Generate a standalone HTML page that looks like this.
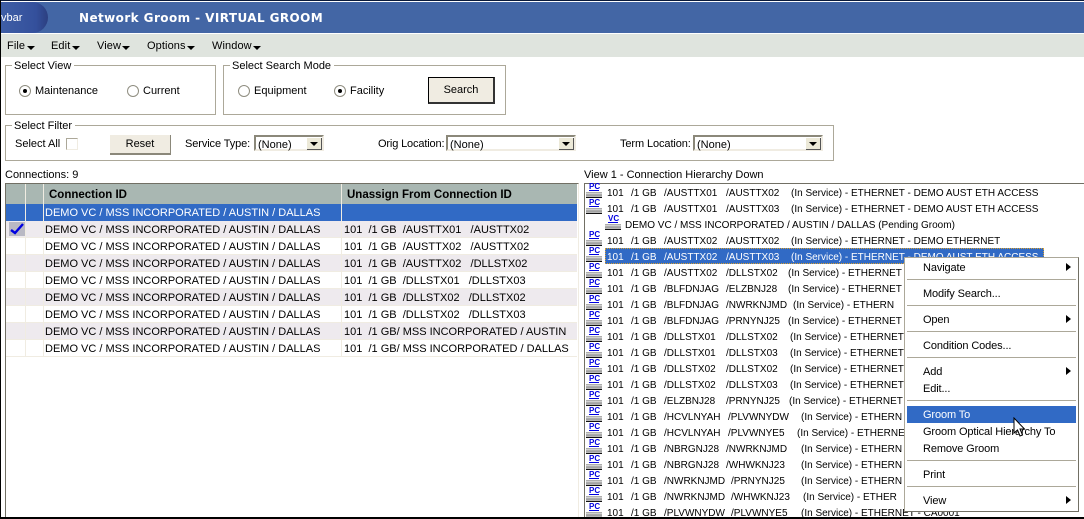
<!DOCTYPE html>
<html><head><meta charset="utf-8"><style>
html,body{margin:0;padding:0;background:#fff}
#p{position:relative;width:1084px;height:519px;overflow:hidden;background:#fff;font:11px/13px "Liberation Sans",sans-serif;color:#000}
#p div,#p span,#p svg{position:absolute;white-space:nowrap}
.g{border:1px solid #aca899;box-sizing:border-box}
.l{background:#fff;padding:0 3px 0 2px;height:13px}
.t{height:13px}
.m{top:40px;font-size:11px;letter-spacing:.1px}
.a{top:46px;width:0;height:0;border:4px solid transparent;border-top:4px solid #000;border-bottom:0}
.r{width:12px;height:12px;top:85px;border-radius:50%;box-sizing:border-box;border:1px solid #8f8d80;background:#fff}
.d{width:4px;height:4px;border-radius:50%;background:#000;left:3px;top:3px}
.b{background:#f0ece2;box-sizing:border-box;text-align:center}
.s{top:135px;height:16px;box-sizing:border-box;border:2px solid #8b887a;border-right-color:#f0ece2;border-bottom-color:#f0ece2;background:#fff;padding-left:2px;line-height:16px;font-size:11px}
.sb{top:1px;right:0;width:15px;height:12px;background:#ece9d8;border-right:1px solid #555;border-bottom:1px solid #555;box-sizing:border-box}
.sb i{position:absolute;left:3px;top:4px;width:0;height:0;border:4px solid transparent;border-top:4px solid #000;border-bottom:0}
.row{left:6px;width:571px;height:17px;box-sizing:border-box;border-bottom:1px solid #f0ece2}
.a1{background:#eeeaee}
.c1{left:39px;top:3px}
.c2{left:338px;top:3px}
.v{position:absolute;width:1px;background:#f0ece2}
.lr{left:585px;width:320px;height:16px;font-size:10px}
.lr span{top:3px}
.ic{left:1px;top:0;width:16px;height:16px}
.ic b{position:absolute;left:3px;top:0;width:10px;font:bold 8px/6px "Liberation Sans",sans-serif;color:#0000e0;border-bottom:1px solid #0000e0;text-align:center;height:6px}
.ic u{position:absolute;left:0;top:8px;width:16px;height:6px;background:linear-gradient(#8a8a8a 0,#d0d0d0 1px,#d0d0d0 2px,#8a8a8a 3px,#b8b8b8 4px,#b8b8b8 5px,#111 5px)}
.mi{left:923px;height:13px;font-size:11px;letter-spacing:-.12px}
.ms{left:907px;width:169px;height:1px;background:#aca899}
.tri{left:1066px;width:0;height:0;border:4px solid transparent;border-left:5px solid #000;border-right:0}
</style></head><body><div id="p">
<div style="left:0;top:0;width:1084px;height:1px;background:#0a1a3a"></div>
<div style="left:0;top:2px;width:1084px;height:31px;background:#4366a5"></div>
<div style="left:0;top:2px;width:48px;height:31px;border-radius:0 20px 20px 0;background:linear-gradient(90deg,#3f5fa6 0%,#34509c 75%,#2c3f80 100%)"></div>
<div style="left:1px;top:12px;color:#fff;font-size:11px">vbar</div>
<div style="left:79px;top:11px;color:#fff;font:bold 12px/15px 'DejaVu Sans',sans-serif;letter-spacing:.42px">Network Groom - VIRTUAL GROOM</div>
<div style="left:0;top:34px;width:1084px;height:23px;background:#dfe4de"></div>
<div class="m" style="left:7px">File</div><div class="a" style="left:27px"></div>
<div class="m" style="left:51px">Edit</div><div class="a" style="left:72px"></div>
<div class="m" style="left:97px">View</div><div class="a" style="left:122px"></div>
<div class="m" style="left:147px">Options</div><div class="a" style="left:187px"></div>
<div class="m" style="left:212px">Window</div><div class="a" style="left:253px"></div>

<div class="g" style="left:5px;top:65px;width:211px;height:50px"></div>
<div class="l" style="left:12px;top:60px">Select View</div>
<div class="r" style="left:19px"><div class="d"></div></div><div class="t" style="left:35px;top:85px">Maintenance</div>
<div class="r" style="left:127px"></div><div class="t" style="left:143px;top:85px">Current</div>

<div class="g" style="left:223px;top:65px;width:283px;height:50px"></div>
<div class="l" style="left:230px;top:60px">Select Search Mode</div>
<div class="r" style="left:238px"></div><div class="t" style="left:254px;top:85px">Equipment</div>
<div class="r" style="left:334px"><div class="d"></div></div><div class="t" style="left:350px;top:85px">Facility</div>
<div class="b" style="left:428px;top:77px;width:67px;height:27px;border:1px solid #000;border-right:2px solid #333;border-bottom:2px solid #333;line-height:24px">Search</div>

<div class="g" style="left:5px;top:125px;width:829px;height:36px"></div>
<div class="l" style="left:12px;top:120px">Select Filter</div>
<div class="t" style="left:15px;top:138px">Select All</div>
<div style="left:66px;top:138px;width:12px;height:12px;box-sizing:border-box;border:1px solid #aca899;border-right-color:#f0ece2;border-bottom-color:#f0ece2"></div>
<div class="b" style="left:110px;top:135px;width:61px;height:20px;border-right:1px solid #8b887a;border-bottom:2px solid #8b887a;line-height:18px">Reset</div>
<div class="t" style="left:185px;top:138px;letter-spacing:-.1px">Service Type:</div>
<div class="s" style="left:254px;width:70px">(None)<div class="sb"><i></i></div></div>
<div class="t" style="left:378px;top:138px;letter-spacing:-.15px">Orig Location:</div>
<div class="s" style="left:446px;width:130px">(None)<div class="sb"><i></i></div></div>
<div class="t" style="left:620px;top:138px;letter-spacing:-.1px">Term Location:</div>
<div class="s" style="left:693px;width:130px">(None)<div class="sb"><i></i></div></div>

<div class="t" style="left:5px;top:169px">Connections: 9</div>
<div class="t" style="left:584px;top:169px">View 1 - Connection Hierarchy Down</div>

<div style="left:5px;top:183px;width:574px;height:336px;box-sizing:border-box;border:1px solid #716f64;border-bottom:0;border-right-color:#f0ece2"></div>
<div style="left:6px;top:184px;width:571px;height:20px;background:#a9b7b2"></div>
<div style="left:49px;top:189px;font-weight:bold;font-size:11.5px">Connection ID</div>
<div style="left:347px;top:189px;font-weight:bold;font-size:11.5px">Unassign From Connection ID</div>
<div class="v" style="left:25px;top:184px;height:20px"></div><div class="v" style="left:43px;top:184px;height:20px"></div><div class="v" style="left:341px;top:184px;height:20px"></div>

<div class="row" style="top:204px;background:#316ac5;color:#fff;border:0"><div class="c1">DEMO VC / MSS INCORPORATED / AUSTIN / DALLAS</div></div>
<div class="row a1" style="top:221px"><div class="c1">DEMO VC / MSS INCORPORATED / AUSTIN / DALLAS</div><div class="c2">101&nbsp; /1 GB&nbsp; /AUSTTX01&nbsp; &nbsp;/AUSTTX02</div></div>
<div class="row" style="top:238px"><div class="c1">DEMO VC / MSS INCORPORATED / AUSTIN / DALLAS</div><div class="c2">101&nbsp; /1 GB&nbsp; /AUSTTX02&nbsp; &nbsp;/AUSTTX02</div></div>
<div class="row a1" style="top:255px"><div class="c1">DEMO VC / MSS INCORPORATED / AUSTIN / DALLAS</div><div class="c2">101&nbsp; /1 GB&nbsp; /AUSTTX02&nbsp; &nbsp;/DLLSTX02</div></div>
<div class="row" style="top:272px"><div class="c1">DEMO VC / MSS INCORPORATED / AUSTIN / DALLAS</div><div class="c2">101&nbsp; /1 GB&nbsp; /DLLSTX01&nbsp; &nbsp;/DLLSTX03</div></div>
<div class="row a1" style="top:289px"><div class="c1">DEMO VC / MSS INCORPORATED / AUSTIN / DALLAS</div><div class="c2">101&nbsp; /1 GB&nbsp; /DLLSTX02&nbsp; &nbsp;/DLLSTX02</div></div>
<div class="row" style="top:306px"><div class="c1">DEMO VC / MSS INCORPORATED / AUSTIN / DALLAS</div><div class="c2">101&nbsp; /1 GB&nbsp; /DLLSTX02&nbsp; &nbsp;/DLLSTX03</div></div>
<div class="row a1" style="top:323px"><div class="c1">DEMO VC / MSS INCORPORATED / AUSTIN / DALLAS</div><div class="c2">101&nbsp; /1 GB/ MSS INCORPORATED / AUSTIN</div></div>
<div class="row" style="top:340px"><div class="c1">DEMO VC / MSS INCORPORATED / AUSTIN / DALLAS</div><div class="c2">101&nbsp; /1 GB/ MSS INCORPORATED / DALLAS</div></div>
<div class="v" style="left:25px;top:204px;height:153px"></div><div class="v" style="left:43px;top:204px;height:153px"></div><div class="v" style="left:341px;top:204px;height:153px"></div>
<div style="left:9px;top:222px;width:16px;height:14px;background:#b9b9c4"></div>
<svg style="left:9px;top:222px" width="16" height="14" viewBox="0 0 16 14"><path d="M2 8 L6 11 L14 2" fill="none" stroke="#0000e0" stroke-width="2.4"/></svg>

<div style="left:584px;top:183px;width:500px;height:336px;box-sizing:border-box;border:1px solid #716f64;border-bottom:0;border-right:0"></div>

<div class="lr" style="top:184px"><div class="ic"><b>PC</b><u></u></div><span style="left:22px">101</span><span style="left:46px">/1 GB</span><span style="left:79px">/AUSTTX01</span><span style="left:141px">/AUSTTX02</span><span style="left:206px">(In Service) - ETHERNET - DEMO AUST ETH ACCESS</span></div>
<div class="lr" style="top:200px"><div class="ic"><b>PC</b><u></u></div><span style="left:22px">101</span><span style="left:46px">/1 GB</span><span style="left:79px">/AUSTTX01</span><span style="left:141px">/AUSTTX03</span><span style="left:206px">(In Service) - ETHERNET - DEMO AUST ETH ACCESS</span></div>
<div class="lr" style="top:216px"><div class="ic" style="left:20px"><b>VC</b><u></u></div><span style="left:40px">DEMO VC / MSS INCORPORATED / AUSTIN / DALLAS (Pending Groom)</span></div>
<div class="lr" style="top:232px"><div class="ic"><b>PC</b><u></u></div><span style="left:22px">101</span><span style="left:46px">/1 GB</span><span style="left:79px">/AUSTTX02</span><span style="left:141px">/AUSTTX02</span><span style="left:206px">(In Service) - ETHERNET - DEMO ETHERNET</span></div>
<div style="left:605px;top:248px;width:439px;height:16px;box-sizing:border-box;background:#316ac5;outline:1px dotted #d8a030;outline-offset:-1px"></div>
<div class="lr" style="top:248px;color:#fff"><div class="ic" style="color:#000"><b>PC</b><u></u></div><span style="left:22px">101</span><span style="left:46px">/1 GB</span><span style="left:79px">/AUSTTX02</span><span style="left:141px">/AUSTTX03</span><span style="left:206px">(In Service) - ETHERNET - DEMO AUST ETH ACCESS</span></div>
<div class="lr" style="top:264px"><div class="ic"><b>PC</b><u></u></div><span style="left:22px">101</span><span style="left:46px">/1 GB</span><span style="left:79px">/AUSTTX02</span><span style="left:141px">/DLLSTX02</span><span style="left:203px">(In Service) - ETHERNET</span></div>
<div class="lr" style="top:280px"><div class="ic"><b>PC</b><u></u></div><span style="left:22px">101</span><span style="left:46px">/1 GB</span><span style="left:79px">/BLFDNJAG</span><span style="left:141px">/ELZBNJ28</span><span style="left:203px">(In Service) - ETHERNET</span></div>
<div class="lr" style="top:296px"><div class="ic"><b>PC</b><u></u></div><span style="left:22px">101</span><span style="left:46px">/1 GB</span><span style="left:79px">/BLFDNJAG</span><span style="left:141px">/NWRKNJMD</span><span style="left:208px">(In Service) - ETHERN</span></div>
<div class="lr" style="top:312px"><div class="ic"><b>PC</b><u></u></div><span style="left:22px">101</span><span style="left:46px">/1 GB</span><span style="left:79px">/BLFDNJAG</span><span style="left:141px">/PRNYNJ25</span><span style="left:203px">(In Service) - ETHERNET</span></div>
<div class="lr" style="top:328px"><div class="ic"><b>PC</b><u></u></div><span style="left:22px">101</span><span style="left:46px">/1 GB</span><span style="left:79px">/DLLSTX01</span><span style="left:141px">/DLLSTX02</span><span style="left:205px">(In Service) - ETHERNET</span></div>
<div class="lr" style="top:344px"><div class="ic"><b>PC</b><u></u></div><span style="left:22px">101</span><span style="left:46px">/1 GB</span><span style="left:79px">/DLLSTX01</span><span style="left:141px">/DLLSTX03</span><span style="left:205px">(In Service) - ETHERNET</span></div>
<div class="lr" style="top:360px"><div class="ic"><b>PC</b><u></u></div><span style="left:22px">101</span><span style="left:46px">/1 GB</span><span style="left:79px">/DLLSTX02</span><span style="left:141px">/DLLSTX02</span><span style="left:205px">(In Service) - ETHERNET</span></div>
<div class="lr" style="top:376px"><div class="ic"><b>PC</b><u></u></div><span style="left:22px">101</span><span style="left:46px">/1 GB</span><span style="left:79px">/DLLSTX02</span><span style="left:141px">/DLLSTX03</span><span style="left:205px">(In Service) - ETHERNET</span></div>
<div class="lr" style="top:392px"><div class="ic"><b>PC</b><u></u></div><span style="left:22px">101</span><span style="left:46px">/1 GB</span><span style="left:79px">/ELZBNJ28</span><span style="left:141px">/PRNYNJ25</span><span style="left:204px">(In Service) - ETHERNET</span></div>
<div class="lr" style="top:408px"><div class="ic"><b>PC</b><u></u></div><span style="left:22px">101</span><span style="left:46px">/1 GB</span><span style="left:79px">/HCVLNYAH</span><span style="left:143px">/PLVWNYDW</span><span style="left:216px">(In Service) - ETHERN</span></div>
<div class="lr" style="top:424px"><div class="ic"><b>PC</b><u></u></div><span style="left:22px">101</span><span style="left:46px">/1 GB</span><span style="left:79px">/HCVLNYAH</span><span style="left:143px">/PLVWNYE5</span><span style="left:212px">(In Service) - ETHERNE</span></div>
<div class="lr" style="top:440px"><div class="ic"><b>PC</b><u></u></div><span style="left:22px">101</span><span style="left:46px">/1 GB</span><span style="left:79px">/NBRGNJ28</span><span style="left:141px">/NWRKNJMD</span><span style="left:216px">(In Service) - ETHERN</span></div>
<div class="lr" style="top:456px"><div class="ic"><b>PC</b><u></u></div><span style="left:22px">101</span><span style="left:46px">/1 GB</span><span style="left:79px">/NBRGNJ28</span><span style="left:141px">/WHWKNJ23</span><span style="left:216px">(In Service) - ETHERN</span></div>
<div class="lr" style="top:472px"><div class="ic"><b>PC</b><u></u></div><span style="left:22px">101</span><span style="left:46px">/1 GB</span><span style="left:79px">/NWRKNJMD</span><span style="left:146px">/PRNYNJ25</span><span style="left:216px">(In Service) - ETHERN</span></div>
<div class="lr" style="top:488px"><div class="ic"><b>PC</b><u></u></div><span style="left:22px">101</span><span style="left:46px">/1 GB</span><span style="left:79px">/NWRKNJMD</span><span style="left:146px">/WHWKNJ23</span><span style="left:218px">(In Service) - ETHER</span></div>
<div class="lr" style="top:504px"><div class="ic"><b>PC</b><u></u></div><span style="left:22px">101</span><span style="left:46px">/1 GB</span><span style="left:79px">/PLVWNYDW</span><span style="left:146px">/PLVWNYE5</span><span style="left:216px">(In Service) - ETHERNET - CA0001</span></div>

<div style="left:904px;top:257px;width:175px;height:255px;background:#fff;box-sizing:border-box;border:1px solid #aca899;border-right:1px solid #716f64;border-bottom:1px solid #716f64"></div>
<div class="mi" style="top:262px">Navigate</div><div class="tri" style="top:263px"></div>
<div class="ms" style="top:279px"></div>
<div class="mi" style="top:288px">Modify Search...</div>
<div class="ms" style="top:305px"></div>
<div class="mi" style="top:314px">Open</div><div class="tri" style="top:315px"></div>
<div class="ms" style="top:331px"></div>
<div class="mi" style="top:340px">Condition Codes...</div>
<div class="ms" style="top:357px"></div>
<div class="mi" style="top:366px">Add</div><div class="tri" style="top:367px"></div>
<div class="mi" style="top:383px">Edit...</div>
<div class="ms" style="top:400px"></div>
<div style="left:907px;top:406px;width:169px;height:17px;background:#316ac5"></div>
<div class="mi" style="top:409px;color:#fff">Groom To</div>
<div class="mi" style="top:426px">Groom Optical Hierarchy To</div>
<div class="mi" style="top:443px">Remove Groom</div>
<div class="ms" style="top:460px"></div>
<div class="mi" style="top:469px">Print</div>
<div class="ms" style="top:486px"></div>
<div class="mi" style="top:495px">View</div><div class="tri" style="top:496px"></div>
<svg style="left:1013px;top:417px" width="14" height="22" viewBox="0 0 14 22"><path d="M1 1 V16 L4.500 13 L7 19 L9.500 18 L7 12 H11.500 Z" fill="#fff" stroke="#000" stroke-width="1"/></svg>

<div style="left:0;top:0;width:1px;height:519px;background:#000"></div>
<div style="left:0;top:517px;width:1084px;height:2px;background:#000"></div>
</div></body></html>
